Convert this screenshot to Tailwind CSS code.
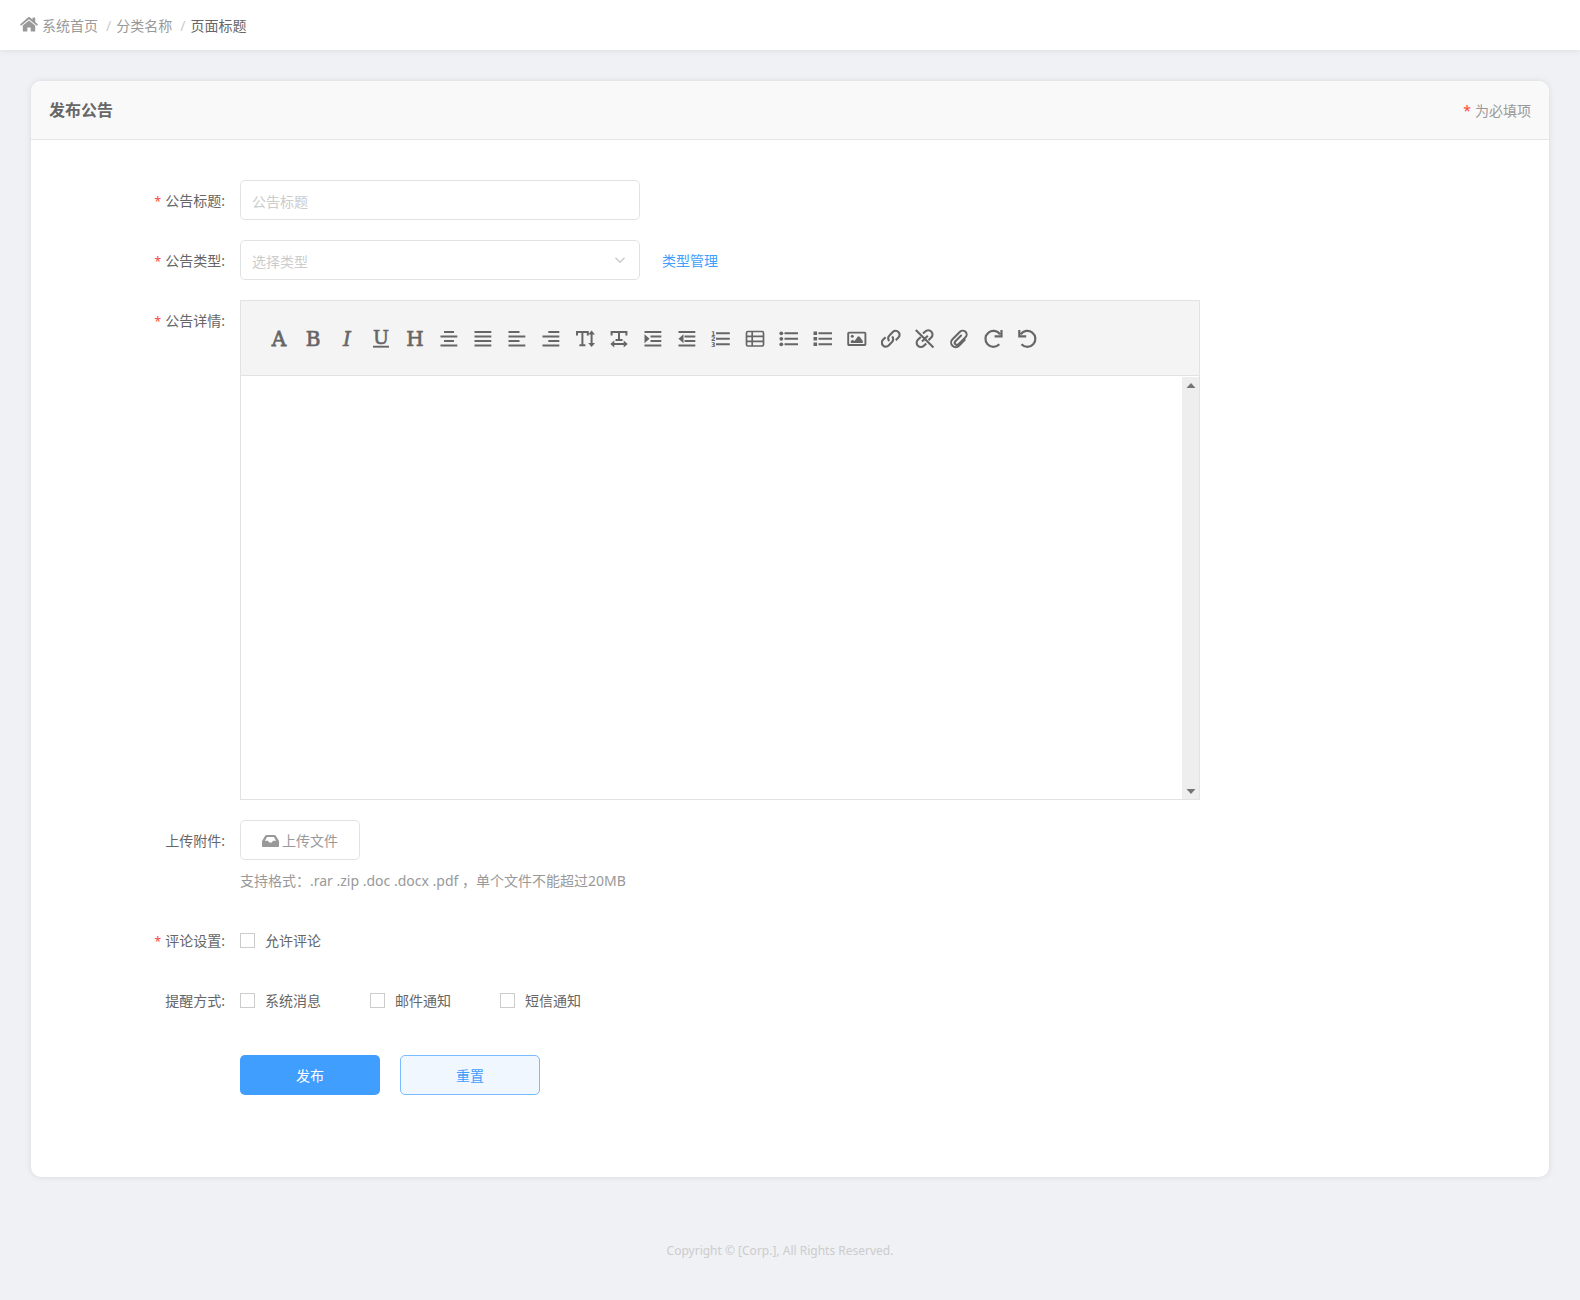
<!DOCTYPE html>
<html lang="zh-CN">
<head>
<meta charset="utf-8">
<meta name="viewport" content="width=device-width, initial-scale=1">
<title>发布公告</title>
<script src="https://cdn.jsdelivr.net/npm/@tailwindcss/browser@4"></script>
</head>
<body class="min-h-screen bg-[#eff1f5] font-['Noto_Sans','Noto_Sans_CJK_SC',sans-serif] text-sm text-[#666]">

<header class="h-[50px] bg-white px-5 shadow-[0_1px_6px_rgba(0,0,0,0.08)]">
  <nav aria-label="breadcrumb" class="flex h-full items-center pt-0.5 text-[#999]">
    <a href="#" class="flex items-center gap-1">
      <svg class="h-5 w-[18px]" viewBox="0 0 18 20" fill="currentColor" aria-hidden="true">
        <path d="M9 4.400 2.800 9.600V15c0 .4.2.6.6.6h3.900v-4.200h3.400v4.200h3.900c.4 0 .6-.2.6-.6V9.600z"/>
        <path d="M8.200 1.300a1.300 1.300 0 0 1 1.600 0l2.700 2.300V1.900c0-.3.200-.5.500-.5h1.700c.3 0 .5.200.5.500v4.200l2.800 2.300-1.100 1.400L9 3.200 1.100 9.800 0 8.400z"/>
      </svg>
      <span>系统首页</span>
    </a>
    <span class="ml-2 mr-[5px] text-[#ccc]">/</span>
    <a href="#">分类名称</a>
    <span class="ml-2 mr-[5px] text-[#ccc]">/</span>
    <span class="text-[#666]">页面标题</span>
  </nav>
</header>

<main class="mx-[31px] mt-[31px] rounded-[10px] bg-white shadow-[0_0_6px_rgba(0,0,0,0.1)]">
  <div class="flex h-[59px] items-center justify-between rounded-t-[10px] border-b border-[#e6e6e6] bg-[#f9f9f9] px-[18px]">
    <h1 class="text-base font-bold">发布公告</h1>
    <p class="pt-0.5 text-[#999]"><span class="mr-1 text-[#ff4433]">*</span>为必填项</p>
  </div>

  <form class="flex flex-col gap-5 pt-10 pr-5 pb-[82px]">
    <div class="flex">
      <label for="title" class="h-10 w-[194px] shrink-0 text-right leading-[42px]"><span class="mr-1 text-xs text-[#ff4433]">*</span>公告标题:</label>
      <input id="title" type="text" placeholder="公告标题" class="ml-[15px] h-10 w-[400px] rounded-[5px] border border-[#e2e2e2] px-[11px] pt-0.5 placeholder:text-[#ccc] focus:outline-none">
    </div>

    <div class="flex">
      <label for="type" class="h-10 w-[194px] shrink-0 text-right leading-[42px]"><span class="mr-1 text-xs text-[#ff4433]">*</span>公告类型:</label>
      <div class="relative ml-[15px]">
        <select id="type" class="h-10 w-[400px] appearance-none rounded-[5px] border border-[#e2e2e2] bg-white px-[11px] pt-1 text-[#ccc] focus:outline-none">
          <option>选择类型</option>
        </select>
        <svg class="pointer-events-none absolute top-[14px] right-[14px] h-3 w-3" viewBox="0 0 12 12" fill="none" stroke="#ccc" stroke-width="1.600" aria-hidden="true"><path d="m1.500 3.800 4.500 4.400 4.500-4.400"/></svg>
      </div>
      <a href="#" class="ml-[22px] h-10 leading-[42px] text-[#409eff]">类型管理</a>
    </div>

    <div class="flex">
      <label for="detail" class="h-10 w-[194px] shrink-0 text-right leading-[42px]"><span class="mr-1 text-xs text-[#ff4433]">*</span>公告详情:</label>
      <div class="ml-[15px] flex h-[500px] w-full max-w-[960px] flex-col border border-[#e2e2e2]">
        <div role="toolbar" aria-label="编辑器工具栏" class="flex h-[75px] shrink-0 items-center gap-3.5 border-b border-[#e2e2e2] bg-[#f4f4f4] px-7 pt-0.5 text-[#666]">
          <button type="button" aria-label="字体"><svg class="size-5 overflow-visible" viewBox="0 0 20 20" fill="currentColor" stroke="currentColor" stroke-width=".8"><text x="10" y="17" text-anchor="middle" font-family="DejaVu Serif" font-size="20">A</text></svg></button>
          <button type="button" aria-label="粗体"><svg class="size-5 overflow-visible" viewBox="0 0 20 20" fill="currentColor" stroke="currentColor" stroke-width=".7"><text x="10" y="17" text-anchor="middle" font-family="DejaVu Serif" font-size="20">B</text></svg></button>
          <button type="button" aria-label="斜体"><svg class="size-5 overflow-visible" viewBox="0 0 20 20" fill="currentColor" stroke="currentColor" stroke-width=".6"><text x="10" y="17" text-anchor="middle" font-family="DejaVu Serif" font-style="italic" font-size="20">I</text></svg></button>
          <button type="button" aria-label="下划线"><svg class="size-5 overflow-visible" viewBox="0 0 20 20" fill="currentColor" stroke="currentColor" stroke-width=".6"><text x="10" y="15" text-anchor="middle" font-family="DejaVu Serif" font-size="19">U</text><path d="M2 17.700h16" stroke-width="1.900"/></svg></button>
          <button type="button" aria-label="标题"><svg class="size-5 overflow-visible" viewBox="0 0 20 20" fill="currentColor" stroke="currentColor" stroke-width=".7"><text x="10" y="17" text-anchor="middle" font-family="DejaVu Serif" font-size="20">H</text></svg></button>
          <button type="button" aria-label="居中"><svg class="size-5" viewBox="0 0 20 20" fill="none" stroke="currentColor" stroke-width="1.900"><path d="M5 3h10M1.500 7.500h16.800M5 12h10M1.500 16.500h16.800"/></svg></button>
          <button type="button" aria-label="两端对齐"><svg class="size-5" viewBox="0 0 20 20" fill="none" stroke="currentColor" stroke-width="1.900"><path d="M1.500 3h16.800M1.500 7.500h16.800M1.500 12h16.800M1.500 16.500h16.800"/></svg></button>
          <button type="button" aria-label="左对齐"><svg class="size-5" viewBox="0 0 20 20" fill="none" stroke="currentColor" stroke-width="1.900"><path d="M1.500 3h11M1.500 7.500h16.800M1.500 12h11M1.500 16.500h16.800"/></svg></button>
          <button type="button" aria-label="右对齐"><svg class="size-5" viewBox="0 0 20 20" fill="none" stroke="currentColor" stroke-width="1.900"><path d="M7.300 3h11M1.500 7.500h16.800M7.300 12h11M1.500 16.500h16.800"/></svg></button>
          <button type="button" aria-label="行高"><svg class="size-5" viewBox="0 0 20 20" fill="none" stroke="currentColor" stroke-width="2"><path d="M2 6.500V3h10.800v3.500M7.400 3v13.300M4.400 16.300h6M16.600 4v12"/><path d="m16.600 1.600 3.400 4h-6.800zM16.600 18l3.400-4h-6.800z" fill="currentColor" stroke="none"/></svg></button>
          <button type="button" aria-label="字宽"><svg class="size-5" viewBox="0 0 20 20" fill="none" stroke="currentColor" stroke-width="2"><path d="M2.600 6.500V3h14.800v3.500M10 3v8M6.500 11h7M4 15h12"/><path d="m1.300 15 4-3.400v6.800zM18.700 15l-4-3.400v6.800z" fill="currentColor" stroke="none"/></svg></button>
          <button type="button" aria-label="增加缩进"><svg class="size-5" viewBox="0 0 20 20" fill="none" stroke="currentColor" stroke-width="1.900"><path d="M1.500 3h16.800M7.500 7.500h10.800M7.500 12h10.800M1.500 16.500h16.800"/><path d="M1.500 5.200v9l5-4.500z" fill="currentColor" stroke="none"/></svg></button>
          <button type="button" aria-label="减少缩进"><svg class="size-5" viewBox="0 0 20 20" fill="none" stroke="currentColor" stroke-width="1.900"><path d="M1.500 3h16.800M7.500 7.500h10.800M7.500 12h10.800M1.500 16.500h16.800"/><path d="M6.500 5.200v9l-5-4.500z" fill="currentColor" stroke="none"/></svg></button>
          <button type="button" aria-label="有序列表"><svg class="size-5 overflow-visible" viewBox="0 0 20 20" fill="none" stroke="currentColor" stroke-width="1.900"><path d="M5 4.300h13.800M5 9.800h13.800M5 15.300h13.800"/><g fill="currentColor" stroke="none" font-family="DejaVu Sans" font-weight="bold" font-size="6.500"><text x="0" y="6.500">1</text><text x="0" y="12">2</text><text x="0" y="17.800">3</text></g></svg></button>
          <button type="button" aria-label="表格"><svg class="size-5" viewBox="0 0 20 20" fill="none" stroke="currentColor" stroke-width="1.700"><rect x="1.500" y="2.500" width="17" height="14.500" rx="1.500"/><path d="M7.200 2.700v14.200M1.300 7.300h17M1.300 12.300h17"/></svg></button>
          <button type="button" aria-label="圆点列表"><svg class="size-5" viewBox="0 0 20 20" fill="none" stroke="currentColor" stroke-width="1.900"><path d="M5.500 4.300H19M5.500 9.800H19M5.500 15.300H19"/><g fill="currentColor" stroke="none"><circle cx="2.300" cy="4.300" r="1.900"/><circle cx="2.300" cy="9.800" r="1.900"/><circle cx="2.300" cy="15.300" r="1.900"/></g></svg></button>
          <button type="button" aria-label="方块列表"><svg class="size-5" viewBox="0 0 20 20" fill="none" stroke="currentColor" stroke-width="1.900"><path d="M5.500 4.300H19M5.500 9.800H19M5.500 15.300H19"/><path d="M.5 2.500h3.600v3.600H.5zM.5 8h3.600v3.600H.5zM.5 13.500h3.600v3.600H.5z" fill="currentColor" stroke="none"/></svg></button>
          <button type="button" aria-label="插入图片"><svg class="size-5" viewBox="0 0 20 20" fill="none" stroke="currentColor" stroke-width="1.900"><rect x="1.200" y="3.600" width="17.200" height="12.400" rx=".8"/><g fill="currentColor" stroke="none"><circle cx="5.300" cy="7.300" r="1.500"/><path d="M3.800 14v-2l1.700-1.200 2 1.200L11 7.300l1.800.5L15.800 12v2z"/></g></svg></button>
          <button type="button" aria-label="插入链接"><svg class="size-5" viewBox="0 0 20 20" fill="none" stroke="currentColor" stroke-width="2.100"><path d="M8.300 12a3.900 3.900 0 0 1 .1-5.600l3.400-3.400a3.900 3.900 0 0 1 5.600 0 3.900 3.900 0 0 1 0 5.600l-2.600 2.600M11.100 7.400a3.900 3.900 0 0 1-.1 5.600l-3.400 3.400a3.900 3.900 0 0 1-5.600 0 3.900 3.900 0 0 1 0-5.600l2.600-2.600"/></svg></button>
          <button type="button" aria-label="取消链接"><svg class="size-5" viewBox="0 0 20 20" fill="none" stroke="currentColor" stroke-width="2.100"><path d="m.8 1 17.700 17.400M8 4.600l2.200-2.100a4.200 4.200 0 0 1 6 0 4.200 4.200 0 0 1 1.300 3c0 1.200-.5 2.200-1.300 3L13.500 11.200M5.800 7.900 2.900 10.700a4.200 4.200 0 0 0 0 6 4.200 4.200 0 0 0 6 0l2.300-2.300M7 12.500l5.800-5.800"/></svg></button>
          <button type="button" aria-label="添加附件"><svg class="size-5" viewBox="0 0 20 20" fill="none" stroke="currentColor" stroke-width="2" stroke-linecap="round"><path d="M15.800 10.900 10 16.800a4.600 4.600 0 0 1-6.500 0 4.600 4.600 0 0 1 0-6.500l7.500-7.500a3.900 3.900 0 0 1 5.500 0 3.900 3.900 0 0 1 0 5.500l-7 7a2.200 2.200 0 0 1-3.100 0 2.200 2.200 0 0 1 0-3.100l5.700-5.700"/></svg></button>
          <button type="button" aria-label="重做"><svg class="size-5" viewBox="0 0 20 20" fill="none" stroke="currentColor" stroke-width="2.200"><path d="M16.300 15.300a8 8 0 1 1 .8-9.900M18.500 1v6.400h-6.900"/></svg></button>
          <button type="button" aria-label="撤销"><svg class="size-5 overflow-visible" viewBox="0 0 20 20" fill="none" stroke="currentColor" stroke-width="2.200"><path d="M4.500 15.300a8 8 0 1 0-.8-9.900M2.300 1v6.400h6.900"/></svg></button>
        </div>
        <div class="flex flex-1 pt-px">
          <textarea id="detail" class="flex-1 resize-none p-3 focus:outline-none"></textarea>
          <div class="flex w-[17px] flex-col justify-between bg-[#eee] py-[5px]" aria-hidden="true">
            <svg class="mx-auto h-[6px] w-[10px]" viewBox="0 0 10 6" fill="#757575"><path d="M5 1 9.500 6H.5z"/></svg>
            <svg class="mx-auto h-[6px] w-[10px]" viewBox="0 0 10 6" fill="#757575"><path d="M5 6 .5 1h9z"/></svg>
          </div>
        </div>
      </div>
    </div>

    <div class="flex">
      <span class="h-10 w-[194px] shrink-0 text-right leading-[42px]">上传附件:</span>
      <div class="ml-[15px]">
        <button type="button" class="flex h-10 w-[120px] items-center justify-center gap-[3px] rounded-[5px] border border-[#e2e2e2] pt-0.5 text-[#999]">
          <svg class="h-3 w-[17px]" viewBox="0 0 17 12" fill="currentColor" aria-hidden="true"><path fill-rule="evenodd" d="M4.600 0h7.800c.6 0 1.100.3 1.400.8l2.900 4.700c.2.300.3.600.3 1V11c0 .6-.4 1-1 1H1c-.6 0-1-.4-1-1V6.500c0-.4.1-.7.3-1L3.200.8C3.500.3 4 0 4.600 0zm.5 2L2.900 5.800h3.200l1 1.800h2.800l1-1.800h3.200L11.900 2z"/></svg>
          <span>上传文件</span>
        </button>
        <p class="h-10 leading-[42px] text-[#999]">支持格式：.rar .zip .doc .docx .pdf ，单个文件不能超过20MB</p>
      </div>
    </div>

    <div class="flex" role="group" aria-labelledby="comment-label">
      <span id="comment-label" class="h-10 w-[194px] shrink-0 text-right leading-[42px]"><span class="mr-1 text-xs text-[#ff4433]">*</span>评论设置:</span>
      <label class="ml-[15px] flex h-10 items-center gap-2.5"><input type="checkbox" class="size-[15px] appearance-none border border-[#ccc] bg-white checked:bg-[#409eff]"><span class="pt-0.5">允许评论</span></label>
    </div>

    <div class="flex" role="group" aria-labelledby="notify-label">
      <span id="notify-label" class="h-10 w-[194px] shrink-0 text-right leading-[42px]">提醒方式:</span>
      <div class="ml-[15px] grid h-10 grid-cols-[repeat(3,130px)] items-center">
        <label class="flex items-center gap-2.5"><input type="checkbox" class="size-[15px] appearance-none border border-[#ccc] bg-white checked:bg-[#409eff]"><span class="pt-0.5">系统消息</span></label>
        <label class="flex items-center gap-2.5"><input type="checkbox" class="size-[15px] appearance-none border border-[#ccc] bg-white checked:bg-[#409eff]"><span class="pt-0.5">邮件通知</span></label>
        <label class="flex items-center gap-2.5"><input type="checkbox" class="size-[15px] appearance-none border border-[#ccc] bg-white checked:bg-[#409eff]"><span class="pt-0.5">短信通知</span></label>
      </div>
    </div>

    <div class="mt-[15px] ml-[209px] flex gap-5">
      <button type="submit" class="h-10 w-[140px] rounded-[5px] bg-[#409eff] pt-0.5 text-white">发布</button>
      <button type="reset" class="h-10 w-[140px] rounded-[5px] border border-[#7abaff] bg-[#f0f7ff] pt-0.5 text-[#409eff]">重置</button>
    </div>
  </form>
</main>

<footer class="pt-16 pr-5 pb-10 text-center text-xs leading-5 text-[#ccc]">Copyright © [Corp.], All Rights Reserved.</footer>

</body>
</html>
